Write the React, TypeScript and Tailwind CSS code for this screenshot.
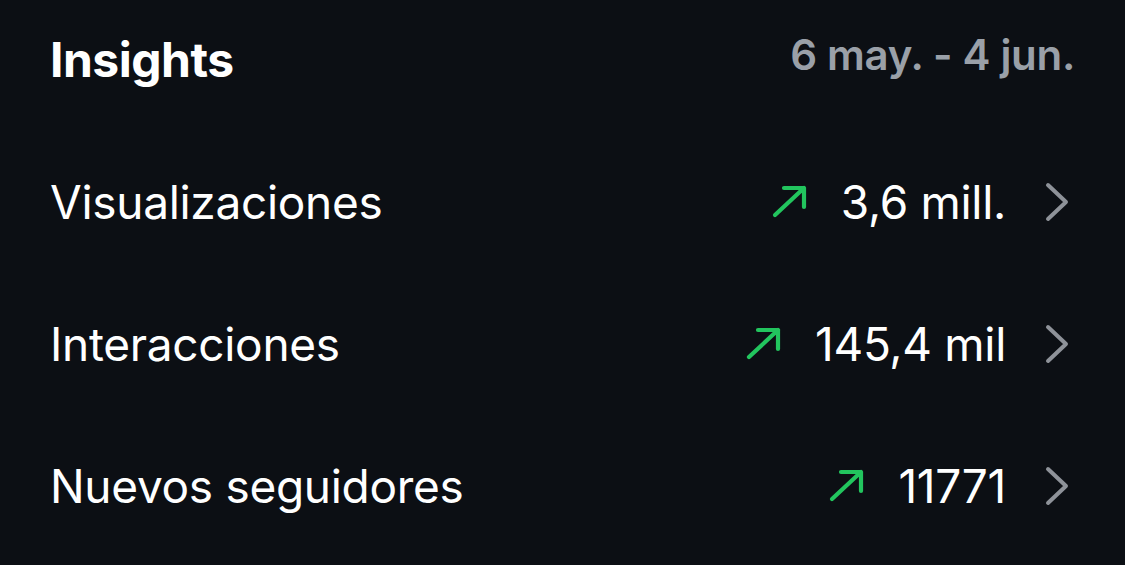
import { ReactNode } from "react";

interface InsightRow {
  label: string;
  value: string;
}

const rows: InsightRow[] = [
  { label: "Visualizaciones", value: "3,6 mill." },
  { label: "Interacciones", value: "145,4 mil" },
  { label: "Nuevos seguidores", value: "11771" },
];

function TrendUp() {
  return (
    <svg width="38" height="34" viewBox="0 0 38 34" fill="none" className="shrink-0">
      <path
        d="M4 30 L33 3 M13 3 H33 V22"
        stroke="#22c55e"
        strokeWidth="4.2"
        strokeLinecap="round"
        strokeLinejoin="round"
      />
    </svg>
  );
}

function Chevron() {
  return (
    <svg width="26" height="40" viewBox="0 0 26 40" fill="none" className="shrink-0">
      <path
        d="M4 3 L22 20 L4 37"
        stroke="#8e9299"
        strokeWidth="4"
        strokeLinecap="round"
        strokeLinejoin="round"
      />
    </svg>
  );
}

function Row({ children }: { children: ReactNode }) {
  return <div className="flex h-[142px] items-center justify-between">{children}</div>;
}

export default function App() {
  return (
    <div
      className="h-[565px] w-[1125px] bg-[#0c0f14] pl-[50px] pr-[50px] text-white"
      style={{ fontFamily: "Inter, 'Noto Sans', sans-serif" }}
    >
      {/* Header */}
      <div className="flex h-[120px] items-center justify-between">
        <span className="text-[48px] font-bold tracking-[-0.5px]">Insights</span>
        <span className="mb-[12px] text-[42px] font-semibold text-[#9aa0a8] tracking-[-0.3px]">
          6 may. - 4 jun.
        </span>
      </div>

      {/* Metrics */}
      <div className="mt-[11px] flex flex-col">
        {rows.map((row) => (
          <Row key={row.label}>
            <span className="text-[46px] tracking-[-0.3px]">{row.label}</span>
            <div className="flex items-center">
              <TrendUp />
              <span className="ml-[32px] text-[46px] tracking-[-0.3px]">{row.value}</span>
              <div className="ml-[38px] mr-[5px]">
                <Chevron />
              </div>
            </div>
          </Row>
        ))}
      </div>
    </div>
  );
}
